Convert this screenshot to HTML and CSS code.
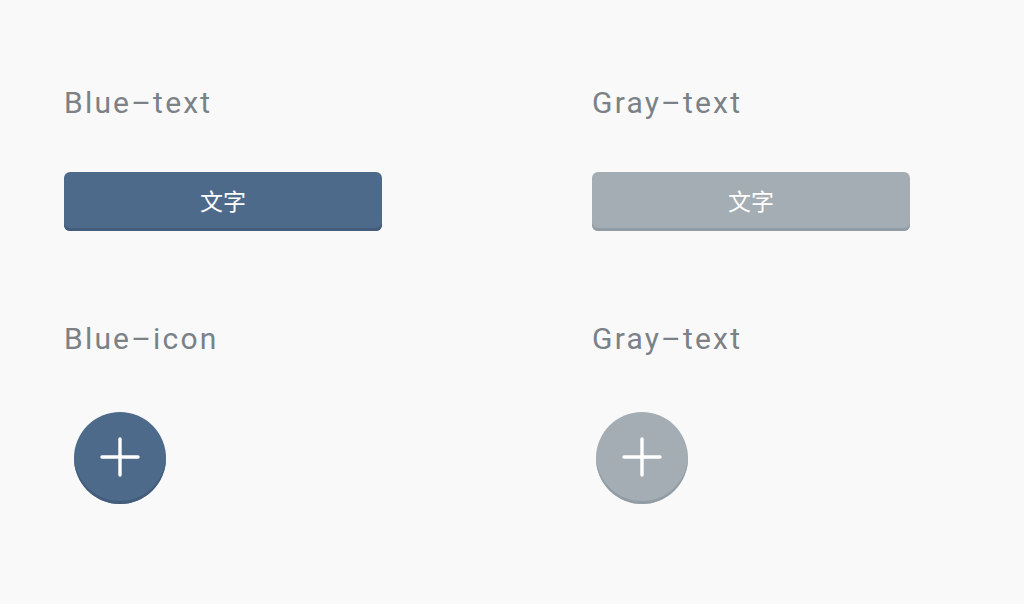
FILE: index.html
```html
<!DOCTYPE html>
<html lang="zh">
<head>
<meta charset="utf-8">
<link rel="stylesheet" href="styles.css">
</head>
<body>
<main class="board">
  <section class="cell">
    <h2 class="label">Blue–text</h2>
    <button class="btn btn-blue">文字</button>
  </section>
  <section class="cell">
    <h2 class="label">Gray–text</h2>
    <button class="btn btn-gray">文字</button>
  </section>
  <section class="cell">
    <h2 class="label">Blue–icon</h2>
    <button class="fab fab-blue fab-left"><svg width="40" height="40" viewBox="0 0 40 40"><path d="M20 2V38M2 20H38" stroke="#fff" stroke-width="3.4" stroke-linecap="round" fill="none"/></svg></button>
  </section>
  <section class="cell">
    <h2 class="label">Gray–text</h2>
    <button class="fab fab-gray fab-right"><svg width="40" height="40" viewBox="0 0 40 40"><path d="M20 2V38M2 20H38" stroke="#fff" stroke-width="3.4" stroke-linecap="round" fill="none"/></svg></button>
  </section>
</main>
</body>
</html>
```
FILE: styles.css
```css
html, body {
  margin: 0;
  padding: 0;
  background: #f9f9f9;
  height: 100%;
}
.board {
  display: grid;
  grid-template-columns: 528px 432px;
  padding: 85px 0 0 64px;
  row-gap: 90px;
}
.cell {
  display: flex;
  flex-direction: column;
  align-items: flex-start;
}
.label {
  margin: 0;
  font-family: Roboto, sans-serif;
  font-weight: 400;
  font-size: 30px;
  line-height: 36px;
  color: #7a8187;
  letter-spacing: 2.2px;
}
.btn {
  margin-top: 51px;
  width: 318px;
  height: 59px;
  border: none;
  border-radius: 6px;
  color: #fff;
  font-family: "Noto Sans CJK SC", sans-serif;
  font-size: 23px;
  padding: 0 0 3px;
  display: flex;
  align-items: center;
  justify-content: center;
}
.btn-blue {
  background: #4e6a8a;
  box-shadow: inset 0 -3px 0 #435c79;
}
.btn-gray {
  background: #a3adb3;
  box-shadow: inset 0 -3px 0 #929ca4;
}
.fab {
  margin-top: 55px;
  width: 92px;
  height: 92px;
  border: none;
  border-radius: 50%;
  padding: 0 0 2px;
  display: flex;
  align-items: center;
  justify-content: center;
}
.fab-left { margin-left: 10px; }
.fab-right { margin-left: 4px; }
.fab-blue {
  background: #4e6a8a;
  box-shadow: inset 0 -3px 0 #435c79;
}
.fab-gray {
  background: #a3adb3;
  box-shadow: inset 0 -3px 0 #929ca4;
}
```
